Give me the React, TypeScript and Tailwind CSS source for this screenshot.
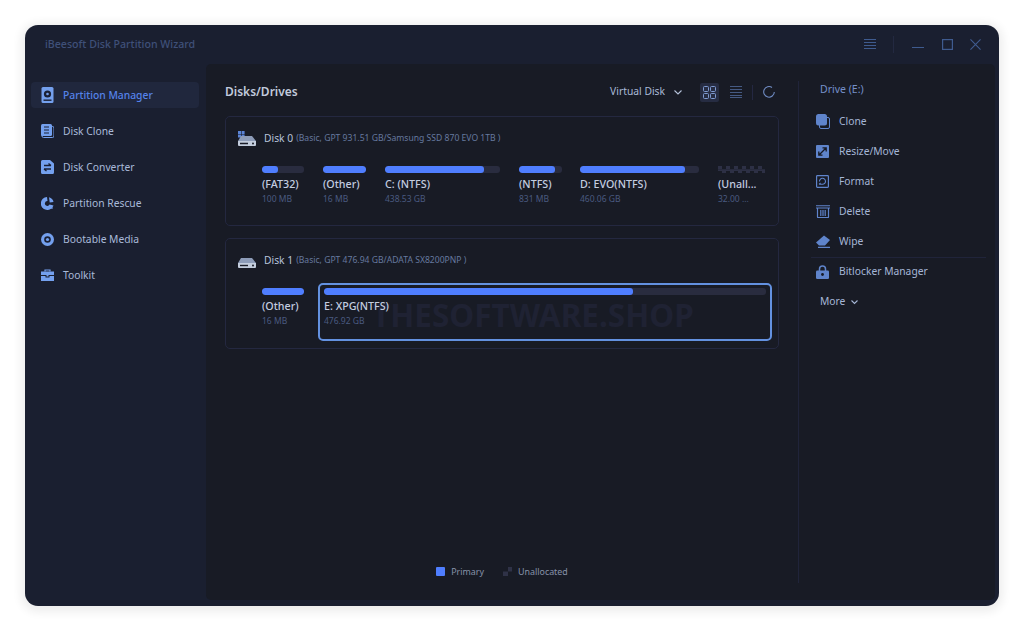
import React from "react";

const C = "#74a0ee";

const Hdd = () => (
  <svg width="13" height="16" viewBox="0 0 13 16"><rect x="0.5" y="0" width="12" height="16" rx="1.5" fill={C} /><circle cx="6.5" cy="7" r="3.6" fill="#1a2035" /><circle cx="6.5" cy="7" r="1.3" fill={C} /><rect x="2.5" y="12.5" width="8" height="1.4" fill="#1a2035" /></svg>
);
const CloneI = () => (
  <svg width="13" height="14" viewBox="0 0 13 14"><rect x="1" y="2.5" width="12" height="11" rx="1.5" fill="none" stroke={C} strokeWidth="1" /><rect x="0" y="0" width="11" height="12" rx="1.5" fill={C} /><path d="M3 3h5M3 6h5M3 9h5" stroke="#1a2035" strokeWidth="1.1" /></svg>
);
const Conv = () => (
  <svg width="13" height="14" viewBox="0 0 13 14"><path d="M1.5 0H9l4 3.5V12.5A1.5 1.5 0 0 1 11.500 14h-10A1.500 1.500 0 0 1 0 12.500v-11A1.500 1.500 0 0 1 1.500 0z" fill={C} /><path d="M3 5.500h7M7.500 3.500l2.500 2M10 9H3M5.500 11L3 9" stroke="#1a2035" strokeWidth="1.300" fill="none" /></svg>
);
const Rescue = () => (
  <svg width="13" height="13" viewBox="0 0 13 13"><path d="M6 0a6.500 6.500 0 1 0 6.500 8.500L8.500 7.500a2.400 2.400 0 1 1-2-3.400z" fill={C} /><path d="M8 0.300a6 6 0 0 1 4.500 4.700L8.700 5.500z" fill={C} /><path d="M9.500 10l2 1.500" stroke={C} strokeWidth="1.400" /></svg>
);
const Boot = () => (
  <svg width="13" height="13" viewBox="0 0 13 13"><circle cx="6.500" cy="6.500" r="6.500" fill={C} /><circle cx="6.500" cy="6.500" r="3.300" fill="#1a2035" /><circle cx="6.500" cy="6.500" r="1.600" fill={C} /></svg>
);
const Tool = () => (
  <svg width="13" height="12" viewBox="0 0 13 12"><path d="M4 2.500V1h5v1.500" fill="none" stroke={C} strokeWidth="1.200" /><rect x="0" y="2.500" width="13" height="3.500" fill={C} /><path d="M0 7h4.500v1.500h4V7H13v5H0z" fill={C} /><rect x="5.500" y="5.500" width="2" height="2" fill={C} /></svg>
);

const DiskIcon = ({ win }: { win?: boolean }) => (
  <svg width="18" height="15" viewBox="0 0 18 15">
    {win && <path d="M0 0h3v3H0zM3.600 0h3v3h-3zM0 3.600h3v3H0zM3.600 3.600h3v3h-3z" fill="#5b84d6" />}
    <path d="M3 5h11l4 5H0z" fill="#8d9cb8" />
    <path d="M0 10h18v4a1 1 0 0 1-1 1H1a1 1 0 0 1-1-1z" fill="#c3cddd" />
    <path d="M2 12.500h8" stroke="#1a1d28" strokeWidth="1.400" />
    <circle cx="15" cy="12.500" r="1" fill="#1a1d28" />
  </svg>
);

const menu = [
  { t: "Partition Manager", i: <Hdd />, a: true },
  { t: "Disk Clone", i: <CloneI /> },
  { t: "Disk Converter", i: <Conv /> },
  { t: "Partition Rescue", i: <Rescue /> },
  { t: "Bootable Media", i: <Boot /> },
  { t: "Toolkit", i: <Tool /> },
];

const P = "#5f84cb";
const actions = [
  { t: "Clone", i: <svg width="14" height="15" viewBox="0 0 14 15"><rect x="3.500" y="3.500" width="10" height="11" rx="1.500" fill="none" stroke={P} /><rect x="0" y="0" width="11" height="11.500" rx="2.500" fill={P} /></svg> },
  { t: "Resize/Move", i: <svg width="13" height="13" viewBox="0 0 13 13"><rect width="13" height="13" rx="1" fill={P} /><path d="M6.500 2.800h3.700v3.700M10.200 2.800L2.800 10.200M2.800 6.500v3.700h3.700" stroke="#171a25" strokeWidth="1.300" fill="none" /></svg> },
  { t: "Format", i: <svg width="13" height="13" viewBox="0 0 13 13"><rect x="0.600" y="0.600" width="11.800" height="11.800" rx="0.800" fill="none" stroke={P} strokeWidth="1.200" /><path d="M3.500 6.500a3 3 0 1 1 3 2.800H3M4.500 8l-1.500 1.300" fill="none" stroke={P} strokeWidth="1.100" /></svg> },
  { t: "Delete", i: <svg width="14" height="13" viewBox="0 0 14 13"><path d="M0 .7h14M0 3h14" stroke={P} strokeWidth="1.100" /><path d="M1.500 3v9a.6.6 0 0 0 .6.6h9.800a.6.6 0 0 0 .6-.6V3M4.800 5v6M7 5v6M9.200 5v6" fill="none" stroke={P} strokeWidth="1.200" /></svg> },
  { t: "Wipe", i: <svg width="15" height="13" viewBox="0 0 15 13"><path d="M0 7.500L8 .5l6 4.500-5 5.500H3z" fill={P} /><path d="M2 12.300h12" stroke={P} strokeWidth="1.200" /></svg> },
];

const Bar = ({ w, pct }: { w: string; pct: number }) => (
  <div className={`h-[7px] rounded-[3px] bg-[#292c3f] overflow-hidden ${w}`}>
    <div className="h-full rounded-[3px] bg-[#4f7eff]" style={{ width: `${pct}%` }} />
  </div>
);

const Part = ({ w, pct, name, size }: { w: string; pct: number; name: string; size: string }) => (
  <div className={`flex flex-col ${w}`}>
    <Bar w="w-full" pct={pct} />
    <div className="mt-[4px] text-[10.700px] leading-[15px] text-[#c4cde0] font-medium whitespace-nowrap">{name}</div>
    <div className="text-[8.500px] leading-[13px] text-[#4a5a80] whitespace-nowrap">{size}</div>
  </div>
);

const Unalloc = () => (
  <div className="flex flex-col w-[47px]">
    <svg width="47" height="7" viewBox="0 0 47 7">
      {[0, 1, 2, 3, 4, 5, 6, 7, 8, 9, 10, 11].map((n) => (
        <rect key={n} x={n * 4} y={n % 2 ? 3.500 : 0} width="4" height="3.500" fill="#2d3045" />
      ))}
      <rect x="0" y="3.500" width="47" height="1.500" fill="#2d3045" />
    </svg>
    <div className="mt-[4px] text-[10.700px] leading-[15px] text-[#c4cde0] font-medium whitespace-nowrap">(Unall...</div>
    <div className="text-[8.500px] leading-[13px] text-[#4a5a80] whitespace-nowrap">32.00 ...</div>
  </div>
);

const Head = ({ name, info, win }: { name: string; info: string; win?: boolean }) => (
  <div className="flex items-center h-[15px]">
    <DiskIcon win={win} />
    <span className="ml-[8px] text-[10.300px] text-[#b7c3da]">{name}</span>
    <span className="ml-[3px] text-[8.600px] text-[#66799f] whitespace-nowrap">{info}</span>
  </div>
);

export default function App() {
  return (
    <div className="w-[1024px] h-[631px] bg-white p-[25px] overflow-hidden font-['Noto_Sans','Open_Sans',sans-serif]">
      <div className="w-[974px] h-[581px] rounded-[13px] bg-[#1a1f30] flex flex-col shadow-[0_2px_10px_4px_#eeeeee] overflow-hidden">
        <div className="h-[39px] flex items-center shrink-0 pl-[20px]">
          <span className="text-[10.600px] text-[#3f5079] font-medium">iBeesoft Disk Partition Wizard</span>
          <div className="ml-auto flex items-center">
            <svg width="12" height="11" viewBox="0 0 12 11"><path d="M0 .5h12M0 3.500h12M0 6.500h12M0 9.500h12" stroke="#3f5b8f" strokeWidth="1" /></svg>
            <div className="w-px h-[17px] bg-[#232941] ml-[17px]" />
            <svg className="ml-[18px]" width="12" height="12" viewBox="0 0 12 12"><path d="M0 8.500h12" stroke="#3f5b8f" strokeWidth="1.200" /></svg>
            <svg className="ml-[18px]" width="11" height="11" viewBox="0 0 11 11"><rect x=".6" y=".6" width="9.800" height="9.800" fill="none" stroke="#3f5b8f" strokeWidth="1.200" /></svg>
            <svg className="ml-[17px] mr-[18px]" width="11" height="11" viewBox="0 0 12 12"><path d="M.5.500l11 11M11.500.500l-11 11" stroke="#3f5b8f" strokeWidth="1.200" /></svg>
          </div>
        </div>
        <div className="flex flex-1 min-h-0">
          <div className="w-[181px] shrink-0 pl-[6px] pr-[7px] pt-[18px] flex flex-col gap-[10px]">
            {menu.map((m) => (
              <div key={m.t} className={`h-[26px] flex items-center rounded-[4px] ${m.a ? "bg-[#20273d]" : ""}`}>
                <span className="w-[32px] flex justify-center shrink-0">{m.i}</span>
                <span className={`pt-[2px] text-[10.300px] ${m.a ? "text-[#5583ea] font-medium" : "text-[#a9bad9]"}`}>{m.t}</span>
              </div>
            ))}
          </div>
          <div className="flex-1 flex bg-[#181b25] rounded-[5px] mr-[4px] mb-[6px]">
            <div className="w-[593px] shrink-0 pl-[19px] pr-[20px] flex flex-col relative border-r border-[#20243a] my-[17px]">
              <div className="flex items-center h-[22px]">
                <span className="text-[12px] font-semibold text-[#c1cadc]">Disks/Drives</span>
                <span className="ml-auto text-[10.300px] text-[#a9b9d6]">Virtual Disk</span>
                <svg className="ml-[9px]" width="8" height="5" viewBox="0 0 8 5"><path d="M.5.500L4 4l3.500-3.500" fill="none" stroke="#b3c0d8" strokeWidth="1.100" /></svg>
                <div className="ml-[18px] w-[19px] h-[19px] rounded-[2px] bg-[#262c42] flex items-center justify-center">
                  <svg width="13" height="13" viewBox="0 0 13 13"><g fill="none" stroke="#7e9ad0" strokeWidth="1"><rect x=".5" y=".5" width="5" height="5" rx="1" /><rect x="7.500" y=".5" width="5" height="5" rx="1" /><rect x=".5" y="7.500" width="5" height="5" rx="1" /><rect x="7.500" y="7.500" width="5" height="5" rx="1" /></g></svg>
                </div>
                <svg className="ml-[11px]" width="12" height="12" viewBox="0 0 12 12"><path d="M0 .5h12M0 3.500h12M0 6.500h12M0 9.500h12M0 11.500h12" stroke="#4b628f" strokeWidth=".9" /></svg>
                <div className="w-px h-[15px] bg-[#242842] ml-[10px]" />
                <svg className="ml-[10px] mr-[3px]" width="12" height="12" viewBox="0 0 12 12"><path d="M9 1.500A5.300 5.300 0 1 0 11.300 6" fill="none" stroke="#6f8bc2" strokeWidth="1.100" /></svg>
              </div>
              <div className="mt-[13px] h-[110px] rounded-[5px] border border-[#242840] pt-[14px] pl-[12px] w-[554px]">
                <Head name="Disk 0" info="(Basic, GPT 931.51 GB/Samsung SSD 870 EVO 1TB )" win />
                <div className="mt-[20px] ml-[24px] flex">
                  <Part w="w-[42px]" pct={38} name="(FAT32)" size="100 MB" />
                  <Part w="w-[43px] ml-[19px]" pct={100} name="(Other)" size="16 MB" />
                  <Part w="w-[115px] ml-[19px]" pct={86} name="C: (NTFS)" size="438.53 GB" />
                  <Part w="w-[43px] ml-[19px]" pct={84} name="(NTFS)" size="831 MB" />
                  <Part w="w-[119px] ml-[18px]" pct={88} name="D: EVO(NTFS)" size="460.06 GB" />
                  <div className="ml-[19px]"><Unalloc /></div>
                </div>
              </div>
              <div className="mt-[12px] h-[111px] rounded-[5px] border border-[#242840] pt-[14px] pl-[12px] w-[554px] relative">
                <span className="absolute left-[146px] top-[56px] text-[31.500px] leading-[40px] font-bold text-[#1f2233] whitespace-nowrap">THESOFTWARE.SHOP</span>
                <div className="relative z-10">
                  <Head name="Disk 1" info="(Basic, GPT 476.94 GB/ADATA SX8200PNP )" />
                  <div className="mt-[15px] ml-[24px] flex items-start">
                    <div className="pt-[5px]"><Part w="w-[42px]" pct={100} name="(Other)" size="16 MB" /></div>
                    <div className="ml-[14px] w-[454px] h-[58px] rounded-[5px] border-2 border-[#6391e0] pt-[3px] px-[4px] flex flex-col">
                      <Part w="w-full" pct={70} name="E: XPG(NTFS)" size="476.92 GB" />
                    </div>
                  </div>
                </div>
              </div>
              <div className="mt-auto mb-[5px] flex items-center justify-center text-[8.900px] text-[#8792a9] w-[554px]">
                <span className="w-[9px] h-[9px] bg-[#4f7eff] rounded-[1px]" />
                <span className="ml-[6px]">Primary</span>
                <svg className="ml-[19px]" width="9" height="9" viewBox="0 0 9 9"><path d="M5 0h4v4.500H5zM0 4.500h5V9H0z" fill="#2f3247" /></svg>
                <span className="ml-[6px]">Unallocated</span>
              </div>
            </div>
            <div className="flex-1 pl-[12px] pr-[9px] pt-[17px] flex flex-col">
              <div className="pl-[9px] h-[16px] text-[10.500px] leading-[16px] text-[#7590c9]">Drive (E:)</div>
              <div className="mt-[9px] flex flex-col">
                {actions.map((a) => (
                  <div key={a.t} className="h-[30px] flex items-center pl-[5px]">
                    <span className="w-[23px] shrink-0 flex">{a.i}</span>
                    <span className="pt-[2px] text-[10.300px] text-[#a5b6d6]">{a.t}</span>
                  </div>
                ))}
              </div>
              <div className="h-px bg-[#20243a] mt-[1px]" />
              <div className="h-[27px] flex items-center pl-[5px]">
                <span className="w-[23px] shrink-0 flex"><svg width="13" height="14" viewBox="0 0 13 14"><path d="M3.500 6V4a3 3 0 0 1 6 0v2" fill="none" stroke={P} strokeWidth="1.500" /><rect y="5.500" width="13" height="8.500" rx="1.200" fill={P} /><circle cx="6.500" cy="9.500" r="1.400" fill="#171a25" /></svg></span>
                <span className="text-[10.300px] text-[#a5b6d6]">Bitlocker Manager</span>
              </div>
              <div className="mt-[2px] h-[30px] flex items-center pl-[9px]">
                <span className="text-[10.300px] text-[#a5b6d6]">More</span>
                <svg className="ml-[6px]" width="7" height="5" viewBox="0 0 7 5"><path d="M.5.500L3.500 3.500l3-3" fill="none" stroke="#a5b6d6" strokeWidth="1.100" /></svg>
              </div>
            </div>
          </div>
        </div>
      </div>
    </div>
  );
}
